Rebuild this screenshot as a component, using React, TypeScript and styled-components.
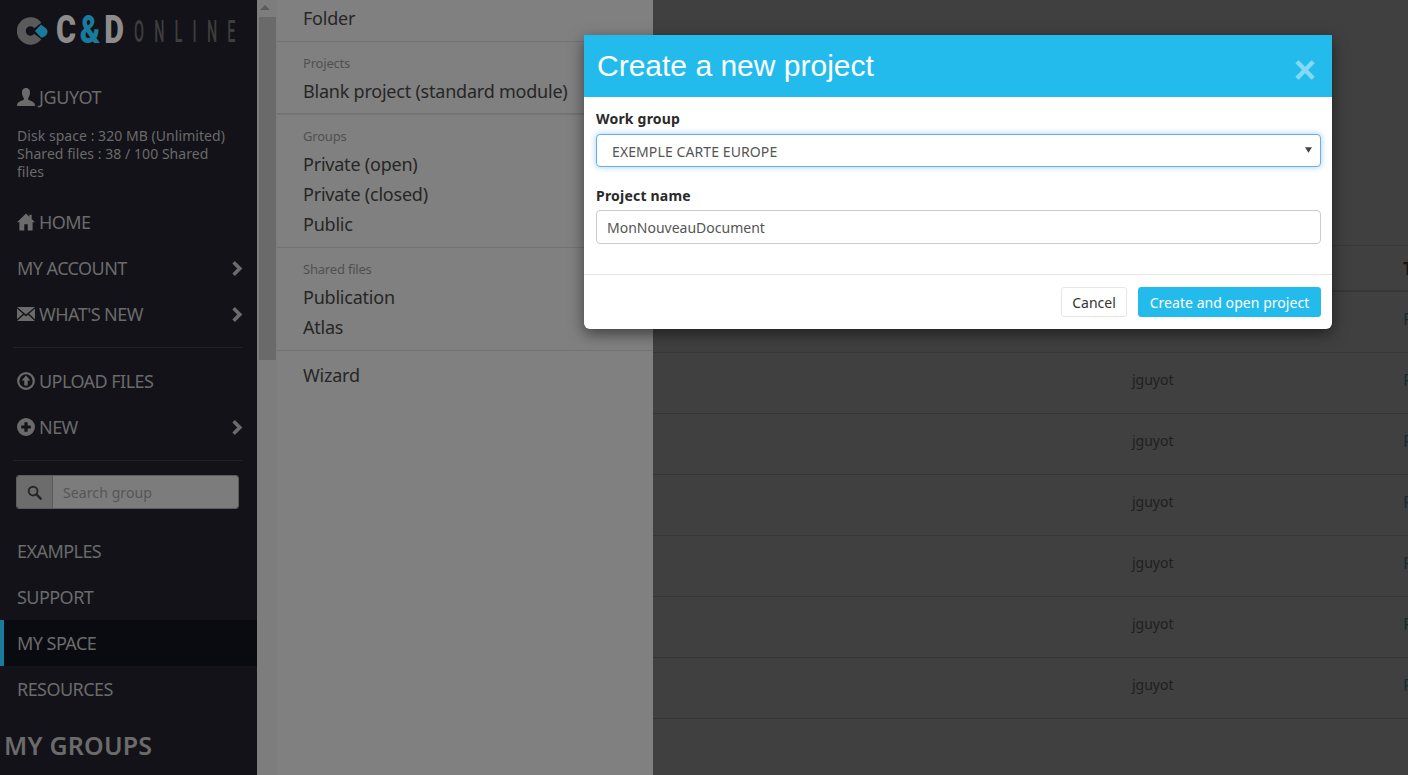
import React from 'react';
import styled, { createGlobalStyle } from 'styled-components';

const UI_FONT = '"Noto Sans", "Open Sans", sans-serif';

const GlobalStyle = createGlobalStyle`
    html, body {
        margin: 0;
        height: 775px;
        overflow: hidden;
        background: #404040;
        font-family: ${UI_FONT};
    }
    * {
        box-sizing: border-box;
    }
`;

const Chevron = () => (
    <ChevronSvg viewBox="0 0 12 15">
        <path d="M3.4 0 L10.9 7.5 L3.4 15 L0.8 12.4 L5.7 7.5 L0.8 2.6 Z" fill="currentColor" />
    </ChevronSvg>
);

const UserIcon = () => (
    <NavSvg viewBox="0 0 18 18">
        <path
            d="M9 0 C12 0 13.2 2.2 13 5 C12.8 7.6 11.8 9.4 11 10.4 C11 11.6 11.6 12 13.5 12.8 C16 13.8 18 14.6 18 18 H0 C0 14.6 2 13.8 4.5 12.8 C6.4 12 7 11.6 7 10.4 C6.2 9.4 5.2 7.6 5 5 C4.8 2.2 6 0 9 0 Z"
            fill="currentColor"
        />
    </NavSvg>
);

const HomeIcon = () => (
    <NavSvg viewBox="0 0 19 18">
        <path
            d="M9.5 0 L13 3.4 V1.4 H15.5 V5.8 L19 9.3 H16.5 V18 H11.3 V11.5 H7.7 V18 H2.5 V9.3 H0 Z"
            fill="currentColor"
        />
    </NavSvg>
);

const MailIcon = () => (
    <NavSvg viewBox="0 0 18 16">
        <path
            d="M0 1 H18 L9 8.4 Z M0 2.6 L6 7.8 L0 13.2 Z M18 2.6 L12 7.8 L18 13.2 Z M0 15 L7 8.8 L9 10.4 L11 8.8 L18 15 Z"
            fill="currentColor"
        />
    </NavSvg>
);

const UploadIcon = () => (
    <NavSvg viewBox="0 0 18 18">
        <circle cx="9" cy="9" r="7.8" fill="none" stroke="currentColor" strokeWidth="2.2" />
        <path d="M9 3.6 L13.4 8.4 H10.7 V13.6 H7.3 V8.4 H4.6 Z" fill="currentColor" />
    </NavSvg>
);

const PlusIcon = () => (
    <NavSvg viewBox="0 0 18 18">
        <path
            fillRule="evenodd"
            d="M9 0 A9 9 0 1 1 9 18 A9 9 0 1 1 9 0 Z M7.4 4.2 V7.4 H4.2 V10.6 H7.4 V13.8 H10.6 V10.6 H13.8 V7.4 H10.6 V4.2 Z"
            fill="currentColor"
        />
    </NavSvg>
);

const SearchIcon = () => (
    <SearchSvg viewBox="0 0 16 16">
        <circle cx="6.5" cy="6.5" r="4.7" fill="none" stroke="currentColor" strokeWidth="2" />
        <path d="M10 10 L14.6 14.6" stroke="currentColor" strokeWidth="2.6" strokeLinecap="round" />
    </SearchSvg>
);

const LogoMark = () => (
    <LogoSvg viewBox="0 0 31 28">
        <path
            d="M20.8 8.4 A9.2 9.2 0 1 0 20.8 19.6"
            fill="none"
            stroke="#5a5a5a"
            strokeWidth="9"
        />
        <path d="M18 14 L24 7.5 C26 9.5 30.5 11 30.5 14.5 C30.5 18 27.5 20.5 24 20.5 Z" fill="#1a7a9c" />
    </LogoSvg>
);

const topNav = [
    { id: 'home', label: 'HOME', icon: <HomeIcon /> },
    { id: 'account', label: 'MY ACCOUNT', arrow: true },
    { id: 'news', label: "WHAT'S NEW", icon: <MailIcon />, arrow: true },
];

const bottomNav = [
    { id: 'examples', label: 'EXAMPLES' },
    { id: 'support', label: 'SUPPORT' },
    { id: 'space', label: 'MY SPACE', active: true },
    { id: 'resources', label: 'RESOURCES' },
];

const rows = [1, 2, 3, 4, 5, 6, 7];

const App: React.FC = () => {
    return (
        <Page>
            <GlobalStyle />
            <Sidebar>
                <Logo>
                    <LogoMark />
                    <LogoWord>
                        C<LogoAmp>&amp;</LogoAmp>D
                    </LogoWord>
                    <LogoOnline>ONLINE</LogoOnline>
                </Logo>
                <UserName>
                    <UserIcon />
                    JGUYOT
                </UserName>
                <Stats>
                    Disk space : 320 MB (Unlimited)
                    <br />
                    Shared files : 38 / 100 Shared files
                </Stats>
                <SideNav>
                    {topNav.map((item) => (
                        <NavRow key={item.id}>
                            {item.icon}
                            {item.label}
                            {item.arrow && <Chevron />}
                        </NavRow>
                    ))}
                    <Divider />
                    <NavRow>
                        <UploadIcon />
                        UPLOAD FILES
                    </NavRow>
                    <NavRow>
                        <PlusIcon />
                        NEW
                        <Chevron />
                    </NavRow>
                    <Divider />
                </SideNav>
                <SearchGroup>
                    <SearchAddon>
                        <SearchIcon />
                    </SearchAddon>
                    <SearchInput placeholder="Search group" />
                </SearchGroup>
                <BottomNav>
                    {bottomNav.map((item) => (
                        <NavRow key={item.id} $active={item.active}>
                            {item.label}
                        </NavRow>
                    ))}
                </BottomNav>
                <GroupsTitle>MY GROUPS</GroupsTitle>
            </Sidebar>

            <ScrollTrack>
                <ScrollArrow />
                <ScrollThumb />
            </ScrollTrack>

            <NewPanel>
                <PanelSection $top={3}>
                    <PanelItem>Folder</PanelItem>
                </PanelSection>
                <PanelSection $thick>
                    <PanelHeading>Projects</PanelHeading>
                    <PanelItem>Blank project (standard module)</PanelItem>
                </PanelSection>
                <PanelSection>
                    <PanelHeading>Groups</PanelHeading>
                    <PanelItem>Private (open)</PanelItem>
                    <PanelItem>Private (closed)</PanelItem>
                    <PanelItem>Public</PanelItem>
                </PanelSection>
                <PanelSection>
                    <PanelHeading>Shared files</PanelHeading>
                    <PanelItem>Publication</PanelItem>
                    <PanelItem>Atlas</PanelItem>
                </PanelSection>
                <PanelSection $top={9} $last>
                    <PanelItem>Wizard</PanelItem>
                </PanelSection>
            </NewPanel>

            <Main>
                <TableHead>
                    <span />
                    <span>Owner</span>
                    <TypeHead>Type</TypeHead>
                </TableHead>
                {rows.map((row) => (
                    <TableRow key={row}>
                        <span />
                        <span>jguyot</span>
                        <TypeCell>Folder</TypeCell>
                    </TableRow>
                ))}
            </Main>

            <Modal>
                <ModalHeader>
                    <ModalTitle>Create a new project</ModalTitle>
                    <CloseButton aria-label="Close">×</CloseButton>
                </ModalHeader>
                <ModalBody>
                    <FieldLabel>Work group</FieldLabel>
                    <SelectWrap>
                        <GroupSelect defaultValue="europe">
                            <option value="europe">EXEMPLE CARTE EUROPE</option>
                        </GroupSelect>
                        <SelectArrow viewBox="0 0 10 8">
                            <path d="M0 0 H10 L5 8 Z" fill="currentColor" />
                        </SelectArrow>
                    </SelectWrap>
                    <FieldLabel $second>Project name</FieldLabel>
                    <NameInput defaultValue="MonNouveauDocument" />
                </ModalBody>
                <ModalFooter>
                    <CancelButton>Cancel</CancelButton>
                    <CreateButton>Create and open project</CreateButton>
                </ModalFooter>
            </Modal>
        </Page>
    );
};

export default App;

const Page = styled.div`
    position: relative;
    display: flex;
    width: 1408px;
    height: 775px;
    overflow: hidden;
`;

const Sidebar = styled.aside`
    flex: 0 0 257px;
    height: 775px;
    background: #121218;
    color: #6b6b6b;
    overflow: hidden;
`;

const Logo = styled.div`
    display: flex;
    align-items: center;
    height: 62px;
    padding: 0 0 0 17px;
`;

const LogoSvg = styled.svg`
    flex: none;
    width: 31px;
    height: 28px;
`;

const LogoWord = styled.span`
    display: inline-block;
    margin-left: 8px;
    font-family: Roboto, "Liberation Sans", sans-serif;
    font-size: 28px;
    font-weight: 900;
    line-height: 28px;
    letter-spacing: 3.5px;
    color: #8c8c8c;
    transform: scale(1.09, 1.36);
    transform-origin: left center;
`;

const LogoAmp = styled.span`
    color: #1a7a9c;
`;

const LogoOnline = styled.span`
    display: inline-block;
    margin-left: 12px;
    font-family: Roboto, "Liberation Sans", sans-serif;
    font-size: 17px;
    font-weight: 500;
    line-height: 20px;
    letter-spacing: 12px;
    color: #3e3e3e;
    transform: scale(0.85, 1.8);
    transform-origin: left center;
    white-space: nowrap;
`;

const NavSvg = styled.svg`
    flex: none;
    width: 18px;
    height: 18px;
    margin-right: 4px;
`;

const SearchSvg = styled.svg`
    width: 15px;
    height: 15px;
`;

const ChevronSvg = styled.svg`
    width: 13px;
    height: 15px;
    margin-left: auto;
`;

const UserName = styled.div`
    display: flex;
    align-items: center;
    height: 24px;
    margin-top: 23px;
    padding-left: 17px;
    font-size: 18px;
    letter-spacing: -0.4px;
`;

const Stats = styled.div`
    width: 213px;
    margin: 17.5px 0 0 17px;
    font-size: 14px;
    line-height: 18px;
    letter-spacing: 0.05px;
`;

const SideNav = styled.nav`
    margin-top: 18.5px;
`;

const NavRow = styled.div<{ $active?: boolean }>`
    display: flex;
    align-items: center;
    height: 46px;
    padding: 0 13px 0 ${(p) => (p.$active ? '13px' : '17px')};
    font-size: 18px;
    letter-spacing: -0.55px;
    white-space: nowrap;
    background: ${(p) => (p.$active ? '#0a0b10' : 'transparent')};
    border-left: ${(p) => (p.$active ? '4px solid #1a7a9c' : 'none')};
`;

const Divider = styled.hr`
    height: 1px;
    margin: 10px 15px 0 13px;
    border: 0;
    background: #212127;

    & + div {
        margin-top: 10px;
    }
`;

const SearchGroup = styled.div`
    display: flex;
    width: 223px;
    height: 34px;
    margin: 14px 0 0 16px;
    border: 1px solid #5c5c5c;
    border-radius: 3px;
    overflow: hidden;
`;

const SearchAddon = styled.div`
    display: flex;
    flex: 0 0 36px;
    align-items: center;
    justify-content: center;
    background: #6c6c6c;
    border-right: 1px solid #5c5c5c;
    color: #262626;
`;

const SearchInput = styled.input`
    flex: 1;
    min-width: 0;
    padding: 0 10px;
    border: 0;
    outline: 0;
    background: #7c7c7c;
    font-family: ${UI_FONT};
    font-size: 14px;
    letter-spacing: 0.1px;

    &::placeholder {
        color: #565656;
        opacity: 1;
    }
`;

const BottomNav = styled.div`
    margin-top: 19px;
`;

const GroupsTitle = styled.div`
    height: 34px;
    margin-top: 16px;
    padding-left: 4px;
    font-size: 25px;
    font-weight: 600;
    line-height: 34px;
    letter-spacing: 0.2px;
`;

const ScrollTrack = styled.div`
    position: relative;
    flex: 0 0 20px;
    height: 775px;
    padding: 17px 1px 0 2px;
    background: #7d7d7d;
`;

const ScrollArrow = styled.div`
    position: absolute;
    top: 5px;
    left: 3px;
    border-left: 5px solid transparent;
    border-right: 5px solid transparent;
    border-bottom: 5px solid #5b5b5b;
`;

const ScrollThumb = styled.div`
    height: 343px;
    background: #6a6a6a;
`;

const NewPanel = styled.section`
    flex: 0 0 376px;
    height: 775px;
    background: #808080;
    color: #262626;
`;

const PanelSection = styled.div<{ $top?: number; $thick?: boolean; $last?: boolean }>`
    padding: ${(p) => p.$top ?? 11}px 0 ${(p) => (p.$thick ? 7 : 8)}px;
    border-bottom: ${(p) => (p.$last ? '0' : `${p.$thick ? 2 : 1}px solid #737373`)};
`;

const PanelHeading = styled.div`
    height: 20px;
    margin-bottom: 3px;
    padding-left: 26px;
    font-size: 13px;
    line-height: 20px;
    letter-spacing: -0.2px;
    color: #505050;
`;

const PanelItem = styled.div`
    height: 30px;
    padding-left: 26px;
    font-size: 18px;
    line-height: 30px;
    letter-spacing: -0.22px;
    white-space: nowrap;
`;

const Main = styled.main`
    flex: 1;
    min-width: 0;
    height: 775px;
    padding-top: 245px;
    background: #404040;
    color: #1f1f1f;
    font-size: 14px;
    overflow: hidden;
`;

const TableHead = styled.div`
    display: grid;
    grid-template-columns: 479px 271px 200px;
    align-items: center;
    height: 47px;
    border-top: 1px solid #383838;
    border-bottom: 2px solid #363636;
    font-weight: 700;
    color: #161616;
`;

const TypeHead = styled.span`
    font-size: 17px;
`;

const TableRow = styled.div`
    display: grid;
    grid-template-columns: 479px 271px 200px;
    align-items: center;
    height: 61px;
    padding-bottom: 7px;
    border-bottom: 1px solid #363636;
`;

const TypeCell = styled.span`
    font-size: 17px;
    color: #1c2a30;
`;

const Modal = styled.div`
    position: absolute;
    top: 35px;
    left: 584px;
    width: 748px;
    height: 294px;
    background: #fff;
    border-radius: 0 0 6px 6px;
    box-shadow: 0 5px 15px rgba(0, 0, 0, 0.5);
`;

const ModalHeader = styled.header`
    display: flex;
    align-items: center;
    justify-content: space-between;
    height: 62px;
    padding: 0 16px 0 13px;
    background: #23bbec;
    color: #fff;
`;

const ModalTitle = styled.h4`
    margin: 0;
    font-family: "Liberation Sans", Arial, sans-serif;
    font-size: 30px;
    font-weight: 400;
    line-height: 34px;
`;

const CloseButton = styled.span`
    margin-top: 8px;
    font-family: "Liberation Sans", Arial, sans-serif;
    font-size: 38px;
    font-weight: 700;
    line-height: 38px;
    opacity: 0.45;
`;

const ModalBody = styled.div`
    height: 178px;
    padding: 12px 11px 0 12px;
    border-bottom: 1px solid #e5e5e5;
`;

const FieldLabel = styled.label<{ $second?: boolean }>`
    display: block;
    height: 20px;
    margin: ${(p) => (p.$second ? '19px' : '0')} 0 ${(p) => (p.$second ? '4px' : '5px')};
    font-size: 14px;
    font-weight: 700;
    line-height: 20px;
    letter-spacing: 0.2px;
    color: #2a2a2a;
`;

const SelectWrap = styled.div`
    position: relative;
`;

const GroupSelect = styled.select`
    display: block;
    width: 100%;
    height: 33px;
    padding: 2px 15px 0;
    border: 1px solid #66afe9;
    border-radius: 4px;
    outline: 0;
    appearance: none;
    background: #fff;
    box-shadow: 0 0 6px rgba(102, 175, 233, 0.6);
    font-family: ${UI_FONT};
    font-size: 14px;
    letter-spacing: 0.1px;
    color: #555;
`;

const SelectArrow = styled.svg`
    position: absolute;
    top: 13px;
    right: 9px;
    width: 7px;
    height: 6px;
    color: #444;
`;

const NameInput = styled.input`
    display: block;
    width: 100%;
    height: 34px;
    padding: 0 10px;
    border: 1px solid #ccc;
    border-radius: 4px;
    outline: 0;
    font-family: ${UI_FONT};
    font-size: 14px;
    color: #555;
`;

const ModalFooter = styled.footer`
    display: flex;
    justify-content: flex-end;
    gap: 11px;
    padding: 12px 11px 0 0;
`;

const CancelButton = styled.button`
    width: 66px;
    height: 30px;
    padding: 0;
    border: 1px solid #e6e6e6;
    border-radius: 3px;
    background: #fff;
    font-family: ${UI_FONT};
    font-size: 14px;
    color: #333;
`;

const CreateButton = styled.button`
    width: 183px;
    height: 30px;
    padding: 0;
    border: 1px solid #23bbec;
    border-radius: 3px;
    background: #23bbec;
    font-family: ${UI_FONT};
    font-size: 14px;
    letter-spacing: 0.05px;
    color: #fff;
`;
